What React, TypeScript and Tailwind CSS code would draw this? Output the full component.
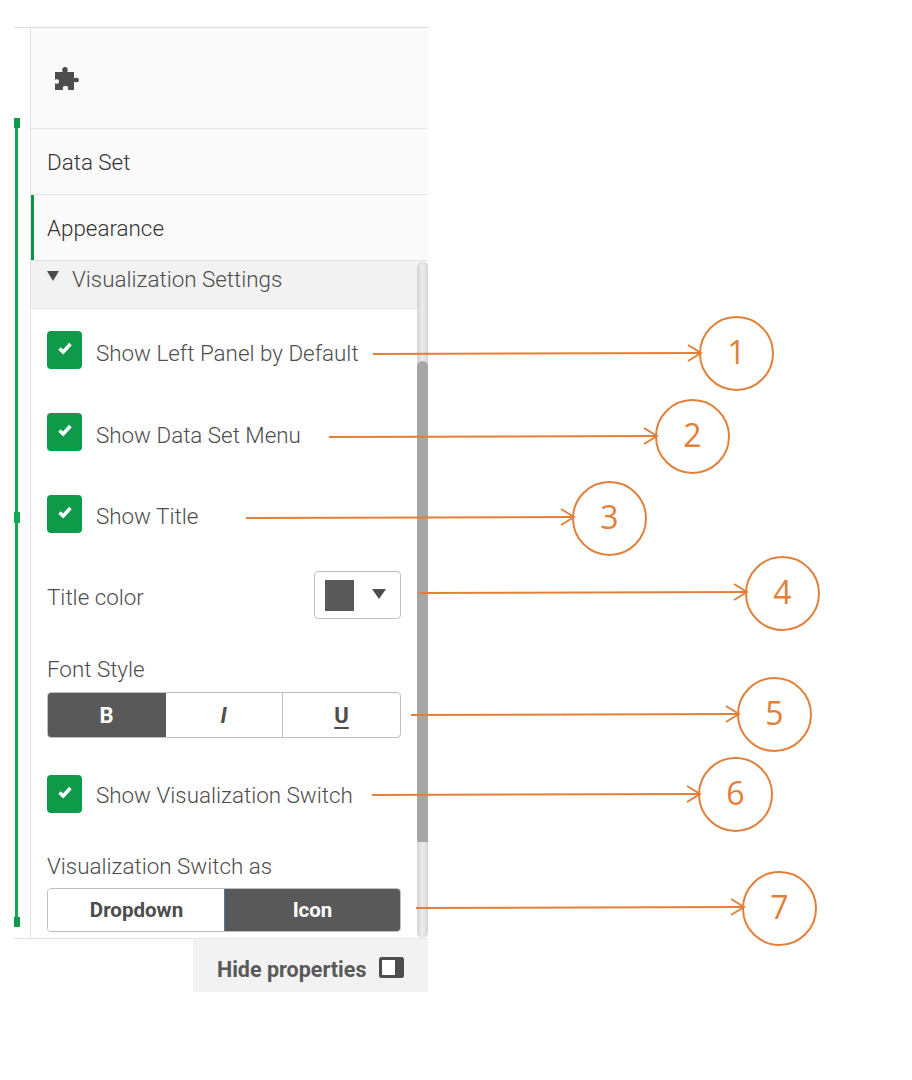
const textFont = "font-['Roboto','Lato',sans-serif]"

const CALLOUTS = [
  { label: '1', left: 'left-[699px]', top: 'top-[316px]' },
  { label: '2', left: 'left-[655px]', top: 'top-[399px]' },
  { label: '3', left: 'left-[572px]', top: 'top-[481px]' },
  { label: '4', left: 'left-[745px]', top: 'top-[556px]' },
  { label: '5', left: 'left-[737px]', top: 'top-[677px]' },
  { label: '6', left: 'left-[698px]', top: 'top-[757px]' },
  { label: '7', left: 'left-[742px]', top: 'top-[871px]' },
]

const ARROWS = [
  { x1: 373, y1: 354, x2: 701, y2: 353 },
  { x1: 329, y1: 437, x2: 657, y2: 436 },
  { x1: 246, y1: 518, x2: 574, y2: 517 },
  { x1: 419, y1: 593, x2: 747, y2: 592 },
  { x1: 411, y1: 715, x2: 739, y2: 714 },
  { x1: 372, y1: 795, x2: 700, y2: 794 },
  { x1: 416, y1: 908, x2: 744, y2: 907 },
]

function CheckRow({ label, className, labelClass = 'pt-[5px]' }: { label: string; className: string; labelClass?: string }) {
  return (
    <div className={`flex h-[38px] items-center ${className}`}>
      <span className="flex h-[38px] w-[35px] items-center justify-center rounded-[4px] bg-[#0f9a4a]">
        <svg viewBox="0 0 16 16" className="mb-[4px] h-[16px] w-[16px]" fill="none" stroke="#ffffff" strokeWidth="3.6">
          <path d="M2.500 8.500l3.700 3.500 7.200-8" />
        </svg>
      </span>
      <span className={`ml-[14px] text-[22.4px] leading-[38px] font-light text-[#4d4d4d] ${labelClass}`}>{label}</span>
    </div>
  )
}

function Callouts() {
  return (
    <>
      <svg className="pointer-events-none absolute left-0 top-0 h-[1080px] w-[912px]" viewBox="0 0 912 1080" fill="none" stroke="#e2803a" strokeWidth="2">
        {ARROWS.map((a, idx) => (
          <g key={idx}>
            <line x1={a.x1} y1={a.y1} x2={a.x2} y2={a.y2} />
            <path d={`M${a.x2 - 13} ${a.y2 - 8}L${a.x2} ${a.y2}L${a.x2 - 13} ${a.y2 + 8}`} />
          </g>
        ))}
      </svg>
      {CALLOUTS.map((c) => (
        <div
          key={c.label}
          className={`absolute ${c.left} ${c.top} flex h-[75px] w-[75px] items-center justify-center rounded-full border-2 border-[#e2803a] pb-[4px] font-['Open_Sans',sans-serif] text-[32px] text-[#e2803a]`}
        >
          {c.label}
        </div>
      ))}
    </>
  )
}

export default function App() {
  return (
    <div className={`relative h-[1080px] w-[912px] overflow-hidden bg-white pl-[14px] pt-[27px] ${textFont}`}>
      <div className="w-[414px]">
        <div className="flex h-[912px] border-y border-y-[#dcdcdc] border-b-[#e4e4e4]">
          {/* selection rail */}
          <div className="relative w-[16px] pt-[90px]">
            <div className="ml-[1px] h-[808px] w-[3px] bg-[#17a853]" />
            <div className="absolute left-0 top-[90px] h-[10px] w-[6px] bg-[#0f9a4a]" />
            <div className="absolute left-0 top-[484px] h-[11px] w-[6px] bg-[#17a853]" />
            <div className="absolute left-0 top-[889px] h-[10px] w-[6px] bg-[#0f9a4a]" />
          </div>

          <div className="flex min-w-0 flex-1 flex-col border-l border-[#e4e4e4]">
            <div className="flex h-[101px] items-center border-b border-[#e6e6e6] bg-[#fafafa] pl-[23px]">
              <svg viewBox="0 0 26 27" className="h-[27px] w-[26px]" fill="#4d4d4d">
                <path d="M1 7h7c.6 0 .8-.5.5-1C7.800 4.800 8.400 2 11 2s3.200 2.800 2.500 4c-.3.500-.1 1 .5 1h6v5.500c0 .6.500.8 1 .5 1-.7 4-.5 4 2s-3 2.700-4 2c-.5-.3-1-.1-1 .5V25h-5.500c-.6 0-.8-.5-.5-1 .6-1 .3-3-2.500-3s-3.100 2-2.500 3c.3.500.1 1-.5 1H1v-6c0-.6.500-.8 1-.5.800.6 3 .3 3-2s-2.200-2.600-3-2c-.5.300-1 .1-1-.5z" />
              </svg>
            </div>
            <div className="flex h-[66px] items-center border-b border-[#e6e6e6] bg-[#fafafa] pl-[16px] pt-[2px] text-[22.4px] font-light text-[#333333]">Data Set</div>
            <div className="flex h-[65px] items-center border-l-[3px] border-[#0f8f47] bg-[#fafafa] pl-[13px] pt-[2px] text-[22.4px] font-light text-[#333333]">Appearance</div>

            <div className="flex min-h-0 flex-1 border-t border-[#e0e0e0]">
              <div className="min-w-0 flex-1 bg-white">
                <div className="flex h-[48px] items-start border-b border-[#e6e6e6] bg-[#f2f2f2] pl-[16px]">
                  <svg viewBox="0 0 12 10" className="mt-[10px] h-[10px] w-[12px]" fill="#4d4d4d">
                    <path d="M0 0h12L6 10z" />
                  </svg>
                  <span className="ml-[13px] text-[22.4px] leading-[36px] font-light text-[#4d4d4d]">Visualization Settings</span>
                </div>

                <div className="pl-[16px] pr-[16px]">
                  <CheckRow label="Show Left Panel by Default" className="mt-[22px]" />
                  <CheckRow label="Show Data Set Menu" className="mt-[44px]" />
                  <CheckRow label="Show Title" className="mt-[44px]" labelClass="pt-[3px]" />

                  <div className="mt-[38px] flex h-[48px] items-center justify-between">
                    <span className="pt-[5px] text-[22.4px] font-light text-[#4d4d4d]">Title color</span>
                    <div className="flex h-[48px] w-[87px] items-center rounded-[4px] border border-[#bfbfbf] bg-white pl-[10px]">
                      <span className="h-[31px] w-[29px] bg-[#595959]" />
                      <svg viewBox="0 0 14 10" className="mb-[2px] ml-[18px] h-[10px] w-[14px]" fill="#4d4d4d">
                        <path d="M0 0h14L7 10z" />
                      </svg>
                    </div>
                  </div>

                  <div className="mt-[34px] pt-[1px] text-[22.4px] leading-[31px] font-light text-[#4d4d4d]">Font Style</div>
                  <div className="mt-[7px] flex h-[46px] overflow-hidden rounded-[4px] border border-[#bfbfbf] text-[22px] text-[#4d4d4d]">
                    <div className="-m-px flex w-[119px] items-center justify-center bg-[#595959] font-bold text-white">B</div>
                    <div className="flex w-[118px] items-center justify-center border-r border-[#bfbfbf] font-bold italic">I</div>
                    <div className="flex flex-1 items-center justify-center font-bold underline underline-offset-4">U</div>
                  </div>

                  <CheckRow label="Show Visualization Switch" className="mt-[37px]" labelClass="pt-[1px]" />

                  <div className="mt-[37px] pt-[1px] text-[22.4px] leading-[31px] font-light text-[#4d4d4d]">Visualization Switch as</div>
                  <div className="mt-[6px] flex h-[44px] overflow-hidden rounded-[4px] border border-[#bfbfbf] text-[20.500px] font-bold text-[#4d4d4d]">
                    <div className="flex w-[177px] items-center justify-center bg-white">Dropdown</div>
                    <div className="-m-px flex flex-1 items-center justify-center border border-[#4a7f9e] bg-[#595959] text-white">Icon</div>
                  </div>
                </div>
              </div>

              {/* scrollbar */}
              <div className="w-[11px] rounded-full bg-gradient-to-r from-[#d4d4d4] via-[#ececec] to-[#d4d4d4] pb-[96px] pt-[100px]">
                <div className="h-full rounded-t-full bg-[#a6a6a6]" />
              </div>
            </div>
          </div>
        </div>

        <div className="ml-auto flex h-[53px] w-[235px] items-center bg-[#f2f2f2] pl-[24px]">
          <span className="pt-[9px] text-[21.500px] font-bold text-[#595959]">Hide properties</span>
          <svg viewBox="0 0 25 21" className="ml-auto mr-[24px] mt-[3px] h-[21px] w-[25px]" fill="none">
            <rect x="1.500" y="1.500" width="22" height="18" rx="1" fill="#ffffff" stroke="#4d4d4d" strokeWidth="3" />
            <rect x="16" y="1.500" width="7.500" height="18" fill="#4d4d4d" />
          </svg>
        </div>
      </div>

      <Callouts />
    </div>
  )
}
